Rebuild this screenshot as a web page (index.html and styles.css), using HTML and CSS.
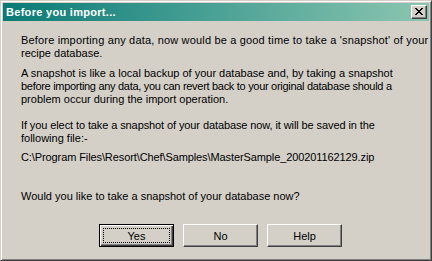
FILE: index.html
```html
<!DOCTYPE html>
<html lang="en">
<head>
    <meta charset="UTF-8">
    <title>Before you import...</title>
    <link rel="stylesheet" href="styles.css">
</head>
<body>
    <div class="window">
        <div class="title-bar">
            <span class="title-text">Before you import...</span>
            <span class="close-btn">
                <svg width="8" height="7" viewBox="0 0 8 7">
                    <path d="M0 0h2v1h1v1h2v-1h1v-1h2v1h-1v1h-1v1h-1v1h1v1h1v1h1v1h-2v-1h-1v-1h-2v1h-1v1h-2v-1h1v-1h1v-1h1v-1h-1v-1h-1v-1h-1z" fill="#000"/>
                </svg>
            </span>
        </div>

        <div class="content">
            <p class="para p1">
                <span class="line wide">Before importing any data, now would be a good time to take a 'snapshot' of your</span>
                <span class="line">recipe database.</span>
            </p>
            <p class="para p2">
                <span class="line">A snapshot is like a local backup of your database and, by taking a snapshot</span>
                <span class="line narrow">before importing any data, you can revert back to your original database should a</span>
                <span class="line">problem occur during the import operation.</span>
            </p>
            <p class="para p3">
                <span class="line tight">If you elect to take a snapshot of your database now, it will be saved in the</span>
                <span class="line">following file:-</span>
            </p>
            <p class="para p4"><span class="line tight">C:\Program Files\Resort\Chef\Samples\MasterSample_200201162129.zip</span></p>
            <p class="para p5"><span class="line">Would you like to take a snapshot of your database now?</span></p>
        </div>

        <div class="buttons">
            <button class="btn btn-default"><span class="focus">Yes</span></button>
            <button class="btn">No</button>
            <button class="btn">Help</button>
        </div>
    </div>
</body>
</html>
```

FILE: styles.css
```css
body {
    margin: 0;
    background-color: #d4d0c8;
    font-family: "Liberation Sans", Arial, sans-serif;
    font-size: 11px;
    color: #000;
}

/* outer dialog frame, classic 3d border */
.window {
    width: 432px;
    height: 261px;
    box-sizing: border-box;
    border: 1px solid;
    border-color: #d4d0c8 #404040 #404040 #d4d0c8;
    box-shadow: inset 1px 1px #fff, inset -1px -1px #808080;
    padding: 2px;
    display: flex;
    flex-direction: column;
}

.title-bar {
    height: 18px;
    display: flex;
    align-items: center;
    justify-content: space-between;
    padding: 0 2px 0 3px;
    background: linear-gradient(to right, #0a7a76, #3e9a90 40%, #8cc6b0);
}

.title-text {
    color: #fff;
    font-family: "Liberation Sans", Arial, sans-serif;
    font-weight: bold;
    font-size: 11px;
    letter-spacing: 0.3px;
}

.close-btn {
    width: 16px;
    height: 14px;
    box-sizing: border-box;
    background-color: #d4d0c8;
    border: 1px solid;
    border-color: #fff #404040 #404040 #fff;
    box-shadow: inset -1px -1px #808080;
    display: flex;
    align-items: center;
    justify-content: center;
    padding: 0 1px 1px 0;
}

.close-btn svg {
    display: block;
}

.content {
    padding: 13px 0 0 18px;
}

.para {
    margin: 0;
    line-height: 13px;
    white-space: nowrap;
}

.line {
    display: block;
}

/* nudge line widths toward the bitmap font of the original */
.line.wide { letter-spacing: 0.17px; }
.line.narrow { letter-spacing: -0.3px; }
.line.tight { letter-spacing: -0.1px; }

.p1 { margin-bottom: 7px; }
.p2 { margin-bottom: 13px; }
.p3 { margin-bottom: 6px; }
.p4 { margin-bottom: 26px; }

.buttons {
    display: flex;
    gap: 9px;
    padding: 21px 0 0 96px;
}

.btn {
    width: 75px;
    height: 23px;
    box-sizing: border-box;
    margin: 0;
    padding: 0;
    font-family: "Liberation Sans", Arial, sans-serif;
    font-size: 11px;
    color: #000;
    background-color: #d4d0c8;
    border: 1px solid;
    border-color: #fff #404040 #404040 #fff;
    box-shadow: inset -1px -1px #808080;
}

/* default button gets black frame and focus rect */
.btn-default {
    border: 1px solid #000;
    box-shadow: inset 1px 1px #fff, inset -1px -1px #404040, inset -2px -2px #808080;
    padding: 3px;
}

.focus {
    display: flex;
    align-items: center;
    justify-content: center;
    height: 100%;
    border: 1px dotted #000;
    box-sizing: border-box;
}
```
